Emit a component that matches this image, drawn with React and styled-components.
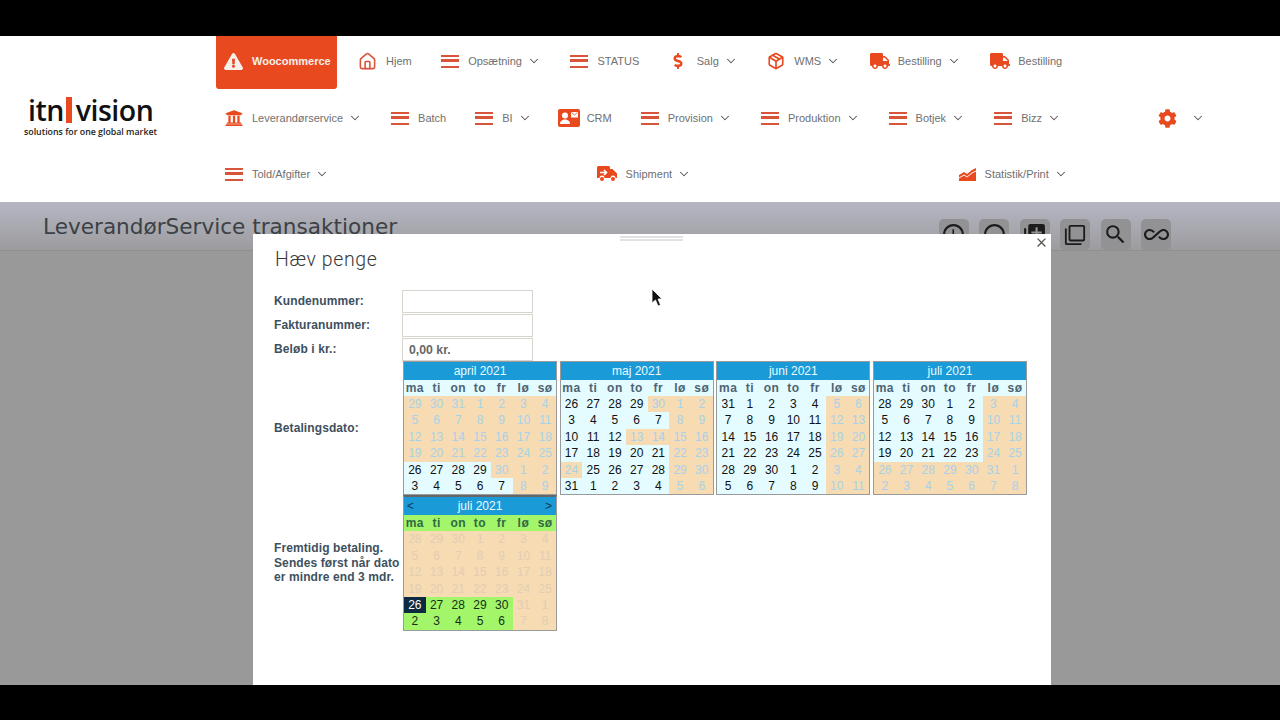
import React from 'react';
import styled, { createGlobalStyle } from 'styled-components';
import { FaExclamationTriangle, FaUniversity, FaDollarSign, FaTruck, FaCog } from 'react-icons/fa';
import { LuChevronDown, LuHouse, LuPackage } from 'react-icons/lu';
import { MdAccessTime, MdRadioButtonUnchecked, MdLibraryAdd, MdFilterNone, MdSearch, MdAllInclusive, MdClose } from 'react-icons/md';

const orange = '#e9491f';

const Global = createGlobalStyle`
   html, body {
      margin: 0;
      padding: 0;
      background: #000;
      overflow: hidden;
   }
   * { box-sizing: border-box; }
`;
const Screen = styled.div`
   width: 1280px;
   height: 720px;
   display: flex;
   flex-direction: column;
   font-family: "Liberation Sans", Arial, sans-serif;
`;
const Letterbox = styled.div`
   height: ${p => p.$height}px;
   flex: none;
   background: #000;
`;
const Nav = styled.header`
   height: 166px;
   flex: none;
   display: flex;
   background: #fff;
`;
const LogoBox = styled.div`
   width: 216px;
   flex: none;
   display: flex;
   flex-direction: column;
   padding: 60px 0 0 24px;
`;
const LogoWord = styled.div`
   display: flex;
   align-items: center;
   height: 28px;
   padding-left: 4px;
   font-family: "Open Sans", sans-serif;
   font-size: 28.5px;
   font-weight: 600;
   line-height: 28px;
   letter-spacing: -0.5px;
   color: #111;
`;
const LogoBar = styled.span`
   width: 6px;
   height: 26px;
   margin: 0 4px 0 2px;
   background: ${orange};
`;
const LogoTag = styled.div`
   margin-top: 2px;
   font-family: "Open Sans", sans-serif;
   font-size: 8.8px;
   font-weight: 600;
   white-space: nowrap;
   color: #222;
`;
const Menu = styled.nav`
   flex: 1;
   display: flex;
   flex-direction: column;
`;
const MenuRow = styled.div`
   height: ${p => p.$height}px;
   display: flex;
   align-items: ${p => p.$top ? 'flex-start' : 'center'};
   padding-left: ${p => p.$inset}px;
   gap: ${p => p.$gap}px;
`;
const Item = styled.a`
   height: ${p => p.$top ? '50px' : 'auto'};
   display: flex;
   align-items: center;
   font-size: 11px;
   white-space: nowrap;
   color: #707070;
   margin-left: ${p => p.$push || 0}px;
`;
const Alert = styled.a`
   width: 121px;
   height: 53px;
   margin-right: -8.5px;
   display: flex;
   align-items: center;
   padding: 0 0 3px 8px;
   border-radius: 0 0 3px 3px;
   background: ${orange};
   color: #f6f0ea;
   font-size: 11px;
   font-weight: bold;
   svg { margin-right: 9px; }
`;
const IconBox = styled.span`
   display: flex;
   align-items: center;
   justify-content: center;
   min-width: ${p => p.$width || 0}px;
   margin-right: ${p => p.$after || 9}px;
   color: ${orange};
`;
const Bars = styled.span`
   width: 18px;
   height: 13px;
   display: block;
   border-top: 2.5px solid #d9553a;
   border-bottom: 2.5px solid #d9553a;
   &::after {
      content: "";
      display: block;
      margin-top: 2.5px;
      height: 2.5px;
      background: #d9553a;
   }
`;
const Chevron = styled(LuChevronDown)`
   margin-left: 5px;
   color: #555;
`;
const Stage = styled.main`
   flex: 1;
   position: relative;
   overflow: hidden;
   background: #999;
`;
const PageHead = styled.div`
   height: 49px;
   display: flex;
   align-items: center;
   justify-content: space-between;
   padding: 0 109px 0 43px;
   background: linear-gradient(#b5b6c2, #9c9c9f);
   border-bottom: 1px solid #8f8f8f;
`;
const PageTitle = styled.h1`
   margin: 1px 0 0;
   font-family: "DejaVu Sans", sans-serif;
   font-size: 21.6px;
   font-weight: 400;
   white-space: nowrap;
   color: #3c4145;
`;
const Actions = styled.div`
   display: flex;
   gap: 10.5px;
   align-self: flex-end;
`;
const Action = styled.span`
   width: 30px;
   height: 31px;
   display: flex;
   align-items: center;
   justify-content: center;
   border-radius: 5px;
   background: #929294;
   color: #1c1c1c;
`;
const Modal = styled.section`
   position: absolute;
   left: 253px;
   top: 32px;
   width: 798px;
   height: 520px;
   padding: 14px 24px 0 21px;
   background: #fff;
`;
const Handle = styled.div`
   position: absolute;
   left: 367px;
   top: 2px;
   width: 63px;
   height: 5px;
   border-top: 2px solid #e2e2e2;
   border-bottom: 2px solid #e2e2e2;
`;
const Close = styled(MdClose)`
   position: absolute;
   right: 2px;
   top: 1px;
   color: #555;
`;
const ModalTitle = styled.h2`
   margin: 0 0 18px 1px;
   height: 24px;
   font-family: Roboto, sans-serif;
   font-size: 19.5px;
   font-weight: 300;
   line-height: 24px;
   letter-spacing: 0.6px;
   color: #3a3a3a;
`;
const Field = styled.div`
   display: flex;
   align-items: center;
   margin-bottom: ${p => p.$tight ? 0 : 1}px;
`;
const Label = styled.label`
   width: 128px;
   flex: none;
   font-size: 12px;
   font-weight: bold;
   line-height: 14.5px;
   letter-spacing: 0.1px;
   color: #3e5060;
`;
const Input = styled.input`
   width: 131px;
   height: 23px;
   padding: 0 6px;
   border: 1px solid #d8d5cf;
   outline: none;
   font: bold 12.3px "Liberation Sans", Arial, sans-serif;
   color: #666;
   background: #fff;
`;
const Months = styled.div`
   display: flex;
   gap: 2.67px;
   margin-left: 1px;
`;
const Cal = styled.div`
   width: 154px;
   border: 1px solid #9a9a9a;
   border-top: ${p => p.$future ? '2px solid #666' : '1px solid #9a9a9a'};
`;
const CalHead = styled.div`
   height: 18px;
   display: flex;
   align-items: center;
   justify-content: space-between;
   padding: 0 3px;
   background: #1b9ad8;
   color: #eafaff;
   font-size: 12px;
`;
const Arrow = styled.span`
   width: 8px;
   color: #123c58;
   line-height: 1;
`;
const MonthName = styled.span`
   flex: 1;
   text-align: center;
`;
const Week = styled.div`
   display: grid;
   grid-template-columns: repeat(7, 1fr);
`;
const WeekDay = styled.div`
   height: 16px;
   line-height: 16px;
   text-align: center;
   font-size: 12px;
   font-weight: bold;
   letter-spacing: 0.5px;
   color: ${p => p.$future ? '#2e6a45' : '#4d6472'};
   background: ${p => p.$future ? '#a3f56a' : '#e4fbff'};
`;
const Day = styled.div`
   height: 16.4px;
   line-height: 16.4px;
   text-align: center;
   font-size: 12px;
   color: ${p => p.$kind === 'selected' ? '#fff' : p.$kind === 'open' ? '#111' : p.$kind === 'shut' ? '#a8d2ea' : p.$kind === 'green' ? '#143018' : '#e3cdb4'};
   background: ${p => p.$kind === 'selected' ? '#0c2a40' : p.$kind === 'open' ? '#e4fbff' : p.$kind === 'green' ? '#a3f56a' : '#f6dbb3'};
`;
const Cursor = styled.svg`
   position: absolute;
   left: 651px;
   top: 87px;
`;

const truck = <FaTruck size={20} />;
const bars = <Bars />;

const CardIcon = () => (
   <svg width="22" height="18" viewBox="0 0 22 18">
      <rect width="22" height="18" rx="2" fill={orange} />
      <circle cx="7" cy="6.5" r="3" fill="#fff" />
      <path d="M2 15c0-3 2.400-4.500 5-4.500s5 1.500 5 4.500z" fill="#fff" />
      <rect x="13" y="3" width="7" height="5.500" fill="#fff" />
      <path d="M13.500 3.500l3 2.500 3-2.500" fill="none" stroke={orange} strokeWidth=".8" />
   </svg>
);
const ShipIcon = () => (
   <svg width="20" height="16" viewBox="0 0 20 16">
      <path d="M1.500 0h10a1.500 1.500 0 0 1 1.500 1.500V3h2.500L20 7.500V12h-1.500a2.500 2.500 0 0 0-5 0h-6a2.500 2.500 0 0 0-5 0H0V1.500A1.500 1.500 0 0 1 1.500 0z" fill={orange} />
      <circle cx="5" cy="13" r="2" fill={orange} />
      <circle cx="16" cy="13" r="2" fill={orange} />
      <path d="M3 6.500h6M7 4l2.500 2.500L7 9" fill="none" stroke="#fff" strokeWidth="1.600" />
   </svg>
);
const StatIcon = () => (
   <svg width="17" height="13" viewBox="0 0 17 13">
      <path d="M0 7l5-3 3 2 5-4 4-2v2.500l-4 2-5 4-3-2-5 3z" fill={orange} />
      <path d="M0 10.500l5-3 3 2 5-4 4-2V13H0z" fill={orange} />
   </svg>
);

const rowOne = [
   { icon: <LuHouse size={19} color="#d9553a" />, text: 'Hjem' },
   { icon: bars, text: 'Opsætning', more: true },
   { icon: bars, text: 'STATUS' },
   { icon: <FaDollarSign size={16} />, width: 19, text: 'Salg', more: true },
   { icon: <LuPackage size={18} strokeWidth={2.2} />, text: 'WMS', more: true },
   { icon: truck, after: 8, text: 'Bestilling', more: true },
   { icon: truck, after: 8, text: 'Bestilling' },
];
const rowTwo = [
   { icon: <FaUniversity size={18} />, text: 'Leverandørservice', more: true },
   { icon: bars, text: 'Batch' },
   { icon: bars, text: 'BI', more: true },
   { icon: <CardIcon />, after: 7, text: 'CRM', push: -3 },
   { icon: bars, text: 'Provision', more: true },
   { icon: bars, text: 'Produktion', more: true },
   { icon: bars, text: 'Botjek', more: true },
   { icon: bars, text: 'Bizz', more: true },
   { icon: <FaCog size={19} />, text: '', more: true, push: 68 },
];
const rowThree = [
   { icon: bars, text: 'Told/Afgifter', more: true },
   { icon: <ShipIcon />, text: 'Shipment', more: true },
   { icon: <StatIcon />, text: 'Statistik/Print', more: true },
];

const weekDays = ['ma', 'ti', 'on', 'to', 'fr', 'lø', 'sø'];

// list of 42 dates starting in the month before
const dates = (start, prevLen, len) => {
   const out = [];
   let d = start, max = prevLen;
   for (let i = 0; i < 42; i++) {
      out.push(d);
      d++;
      if (d > max) { d = 1; max = len; }
   }
   return out;
};

const months = [
   { name: 'april 2021', days: dates(29, 31, 30), mask: '000000000000000000000000000011110001111100' },
   { name: 'maj 2021', days: dates(26, 30, 31), mask: '111100011111001110000111110001111001111100' },
   { name: 'juni 2021', days: dates(31, 31, 30), mask: '111110011111001111100111110011111001111100' },
   { name: 'juli 2021', days: dates(28, 30, 31), mask: '111110011111001111100111110000000000000000' },
];
const futureMask = '000000000000000000000000000021111001111100';

const MenuItem = ({ icon, text, more, push, width, after, top }) => (
   <Item $push={push} $top={top}>
      <IconBox $width={width} $after={after}>{icon}</IconBox>
      {text}
      {more && <Chevron size={14} strokeWidth={1.8} />}
   </Item>
);

const Calendar = ({ name, days, mask, future }) => (
   <Cal $future={future}>
      <CalHead>
         {future && <Arrow>&lt;</Arrow>}
         <MonthName>{name}</MonthName>
         {future && <Arrow>&gt;</Arrow>}
      </CalHead>
      <Week>
         {weekDays.map(w => <WeekDay key={w} $future={future}>{w}</WeekDay>)}
      </Week>
      <Week>
         {days.map((d, i) => {
            let kind = mask[i] === '1' ? 'open' : 'shut';
            if (future) kind = mask[i] === '2' ? 'selected' : mask[i] === '1' ? 'green' : 'faint';
            return <Day key={i} $kind={kind}>{d}</Day>;
         })}
      </Week>
   </Cal>
);

export default function App() {
   return (
      <Screen>
         <Global />
         <Letterbox $height={36} />
         <Nav>
            <LogoBox>
               <LogoWord>itn<LogoBar />vision</LogoWord>
               <LogoTag>solutions for one global market</LogoTag>
            </LogoBox>
            <Menu>
               <MenuRow $height={54} $top $inset={0} $gap={29.5}>
                  <Alert><FaExclamationTriangle size={19} />Woocommerce</Alert>
                  {rowOne.map((m, i) => <MenuItem key={i} top {...m} />)}
               </MenuRow>
               <MenuRow $height={56} $inset={9} $gap={29}>
                  {rowTwo.map((m, i) => <MenuItem key={i} {...m} />)}
               </MenuRow>
               <MenuRow $height={56} $inset={9} $gap={267.5}>
                  {rowThree.map((m, i) => <MenuItem key={i} {...m} />)}
               </MenuRow>
            </Menu>
         </Nav>
         <Stage>
            <PageHead>
               <PageTitle>LeverandørService transaktioner</PageTitle>
               <Actions>
                  <Action><MdAccessTime size={25} /></Action>
                  <Action><MdRadioButtonUnchecked size={25} /></Action>
                  <Action><MdLibraryAdd size={25} /></Action>
                  <Action><MdFilterNone size={22} /></Action>
                  <Action><MdSearch size={25} /></Action>
                  <Action><MdAllInclusive size={25} /></Action>
               </Actions>
            </PageHead>
            <Modal>
               <Handle />
               <Close size={15} />
               <ModalTitle>Hæv penge</ModalTitle>
               <Field>
                  <Label>Kundenummer:</Label>
                  <Input />
               </Field>
               <Field>
                  <Label>Fakturanummer:</Label>
                  <Input />
               </Field>
               <Field $tight>
                  <Label>Beløb i kr.:</Label>
                  <Input defaultValue="0,00 kr." />
               </Field>
               <Field $tight>
                  <Label>Betalingsdato:</Label>
                  <Months>
                     {months.map(m => <Calendar key={m.name} {...m} />)}
                  </Months>
               </Field>
               <Field $tight>
                  <Label>Fremtidig betaling.<br />Sendes først når dato<br />er mindre end 3 mdr.</Label>
                  <Months>
                     <Calendar future name="juli 2021" days={dates(28, 30, 31)} mask={futureMask} />
                  </Months>
               </Field>
            </Modal>
            <Cursor width="12" height="18" viewBox="0 0 12 18">
               <path d="M1 0v14l3.500-3 2.500 6 2.500-1-2.500-6H11z" fill="#111" stroke="#fff" strokeWidth=".8" />
            </Cursor>
         </Stage>
         <Letterbox $height={35} />
      </Screen>
   );
}
